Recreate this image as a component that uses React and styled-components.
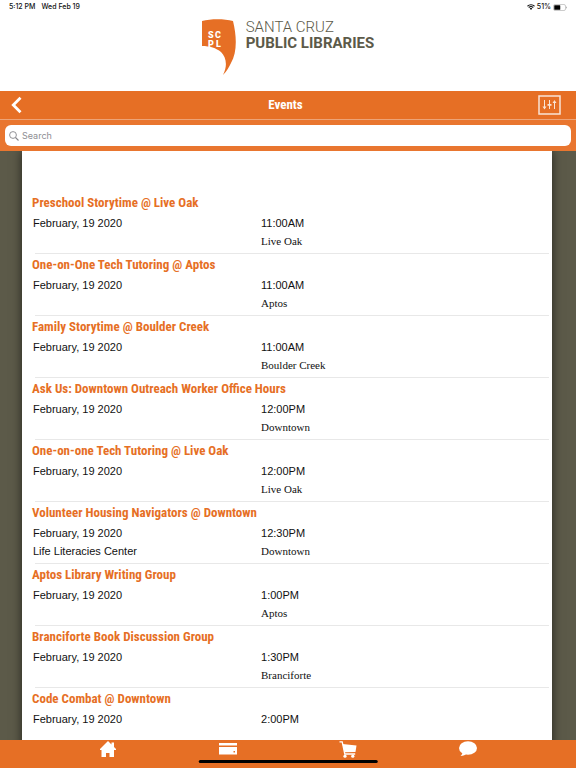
import React, { useState } from "react";
import styled, { createGlobalStyle } from "styled-components";

const events = [
  { title: "Preschool Storytime @ Live Oak", time: "11:00AM", place: "Live Oak" },
  { title: "One-on-One Tech Tutoring @ Aptos", time: "11:00AM", place: "Aptos" },
  { title: "Family Storytime @ Boulder Creek", time: "11:00AM", place: "Boulder Creek" },
  { title: "Ask Us: Downtown Outreach Worker Office Hours", time: "12:00PM", place: "Downtown" },
  { title: "One-on-one Tech Tutoring @ Live Oak", time: "12:00PM", place: "Live Oak" },
  {
    title: "Volunteer Housing Navigators @ Downtown",
    time: "12:30PM",
    place: "Downtown",
    room: "Life Literacies Center",
  },
  { title: "Aptos Library Writing Group", time: "1:00PM", place: "Aptos" },
  { title: "Branciforte Book Discussion Group", time: "1:30PM", place: "Branciforte" },
  { title: "Code Combat @ Downtown", time: "2:00PM" },
];

function App() {
  const [query, setQuery] = useState("");

  const shown = events.filter((event) =>
    event.title.toLowerCase().includes(query.toLowerCase())
  );

  return (
    <Screen>
      <GlobalStyle />
      <StatusBar>
        <StatusGroup $gap={6}>
          <span>5:12 PM</span>
          <span>Wed Feb 19</span>
        </StatusGroup>
        <StatusGroup $gap={2}>
          <WifiIcon />
          <span>51%</span>
          <BatteryIcon />
        </StatusGroup>
      </StatusBar>

      <Brand>
        <LogoMark />
        <BrandName>
          <span>SANTA CRUZ</span>
          <strong>PUBLIC LIBRARIES</strong>
        </BrandName>
      </Brand>

      <NavBar>
        <NavButton aria-label="Back">
          <BackIcon />
        </NavButton>
        <h1>Events</h1>
        <NavButton aria-label="Filter" $end>
          <FilterIcon />
        </NavButton>
      </NavBar>

      <SearchBar>
        <SearchField>
          <SearchIcon />
          <input
            type="text"
            aria-label="Search"
            placeholder="Search"
            value={query}
            onChange={(e) => setQuery(e.target.value)}
          />
        </SearchField>
      </SearchBar>

      <Content>
        <Sheet>
          {shown.map((event) => (
            <Event key={event.title}>
              <h2>{event.title}</h2>
              <Details>
                <span>February, 19 2020</span>
                <span>{event.time}</span>
                <span>{event.room}</span>
                <Place>{event.place}</Place>
              </Details>
            </Event>
          ))}
        </Sheet>
      </Content>

      <TabBar>
        <TabButton aria-label="Home">
          <HomeIcon />
        </TabButton>
        <TabButton aria-label="Library card">
          <CardIcon />
        </TabButton>
        <TabButton aria-label="Cart">
          <CartIcon />
        </TabButton>
        <TabButton aria-label="Messages">
          <ChatIcon />
        </TabButton>
        <HomeIndicator />
      </TabBar>
    </Screen>
  );
}

//Icons
const LogoMark = () => (
  <svg width="34" height="56" viewBox="0 0 34 56" aria-hidden="true">
    <path
      d="M0 2C9-.5 22-.5 31 2c4 16 4 32-2 42-2 4-4 8-8 12 5-10 3-18-2-23C14 29 8 27 0 27z"
      fill="#e66f25"
    />
    <g fill="#fff" fontFamily="Roboto, sans-serif" fontWeight="900" fontSize="9">
      <text x="6" y="19">S</text>
      <text x="13" y="19">C</text>
      <text x="6" y="28">P</text>
      <text x="14" y="28">L</text>
    </g>
  </svg>
);

const WifiIcon = () => (
  <svg width="8" height="6" viewBox="0 0 16 12" aria-hidden="true">
    <path d="M1 4.500a10 10 0 0 1 14 0M3.500 7.200a6.500 6.500 0 0 1 9 0" fill="none" stroke="#111" strokeWidth="2.200" />
    <path d="M5.500 9a3.500 3.500 0 0 1 5 0L8 11.800z" fill="#111" />
  </svg>
);

const BatteryIcon = () => (
  <svg width="14" height="7" viewBox="0 0 28 14" aria-hidden="true">
    <rect x="1" y="1" width="24" height="12" rx="3" fill="none" stroke="#999" />
    <rect x="2.500" y="2.500" width="12" height="9" rx="1" fill="#000" />
    <path d="M26 5c2 0 2 4 0 4z" fill="#999" />
  </svg>
);

const BackIcon = () => (
  <svg width="12" height="18" viewBox="0 0 12 18" aria-hidden="true">
    <path d="M10.500 1.800L3.300 9l7.200 7.200" fill="none" stroke="#fff" strokeWidth="2.800" />
  </svg>
);

const FilterIcon = () => (
  <svg width="23" height="20" viewBox="0 0 23 20" aria-hidden="true">
    <rect x="1" y="1" width="21" height="18" fill="none" stroke="#f9e4d6" strokeWidth="1.500" />
    <path d="M6.500 5v9M11.500 5v9M16.500 6v8" stroke="#f9e4d6" />
    <path d="M4.500 11.500h4l-2 3zM9.500 9h4v1.800h-4zM14.500 8h4l-2-3z" fill="#f9e4d6" />
  </svg>
);

const SearchIcon = () => (
  <svg width="10" height="10" viewBox="0 0 10 10" aria-hidden="true">
    <circle cx="4" cy="4" r="3.400" fill="none" stroke="#86868a" strokeWidth="0.900" />
    <path d="M6.500 6.500L9.500 9.500" stroke="#86868a" strokeWidth="1.100" />
  </svg>
);

const HomeIcon = () => (
  <svg width="18" height="18" viewBox="0 0 18 18" aria-hidden="true">
    <path d="M9 1L1 9v1h1.500v7H7v-4h3.500v4H15v-7h2V9l-2-2V2.500h-2.500v2z" fill="#fff" />
  </svg>
);

const CardIcon = () => (
  <svg width="18" height="18" viewBox="0 0 18 18" aria-hidden="true">
    <path d="M0 3h18v2.500H0z" fill="#fff" />
    <path d="M0 7h18v7.500H0zM14.500 11v1.500H16V11z" fill="#fff" fillRule="evenodd" />
  </svg>
);

const CartIcon = () => (
  <svg width="18" height="18" viewBox="0 0 18 18" aria-hidden="true">
    <path d="M3.500 4L17.500 5.500l-1 6.500-11 .3z" fill="#fff" />
    <path d="M.5 1.800h2.700l2.600 12.200h10.400" fill="none" stroke="#fff" strokeWidth="1.300" />
    <circle cx="6" cy="16.200" r="1.600" fill="#fff" />
    <circle cx="13.800" cy="16.200" r="1.600" fill="#fff" />
  </svg>
);

const ChatIcon = () => (
  <svg width="18" height="18" viewBox="0 0 18 18" aria-hidden="true">
    <ellipse cx="9" cy="8" rx="9" ry="6.800" fill="#fff" />
    <path d="M3.500 11.500c0 2-.5 3-2 4.500 3 0 5-1 6-2.500z" fill="#fff" />
  </svg>
);

const GlobalStyle = createGlobalStyle`
  * {
    box-sizing: border-box;
  }

  body {
    margin: 0;
    background: #fff;
    font-family: "Liberation Sans", Arial, sans-serif;
  }

  h1, h2 {
    margin: 0;
    font-family: "Roboto Condensed", Roboto, sans-serif;
    font-size: 13px;
    font-weight: bold;
    line-height: 22px;
  }

  button {
    display: flex;
    padding: 0;
    border: 0;
    background: none;
    cursor: pointer;
  }

  svg {
    display: block;
    flex-shrink: 0;
  }
`;

const Screen = styled.div`
  display: flex;
  flex-direction: column;
  height: 100vh;
`;

const StatusBar = styled.div`
  display: flex;
  justify-content: space-between;
  padding: 2px 9px 0;
  font-family: Inter, sans-serif;
  font-size: 7px;
  font-weight: 500;
  line-height: 10px;
  color: #111;
`;

const StatusGroup = styled.div`
  display: flex;
  align-items: center;
  gap: ${({ $gap }) => $gap}px;
`;

const Brand = styled.header`
  display: flex;
  justify-content: center;
  gap: 10px;
  height: 79px;
  padding-top: 7px;
`;

const BrandName = styled.div`
  display: flex;
  flex-direction: column;
  font-family: Roboto, sans-serif;
  font-size: 15px;
  font-weight: 300;
  line-height: 16px;
  color: #5c5a49;

  strong {
    font-weight: 700;
  }
`;

const NavBar = styled.nav`
  display: grid;
  grid-template-columns: 1fr auto 1fr;
  align-items: center;
  height: 29px;
  padding: 0 15px 0 10px;
  background: #e66f25;
  border-bottom: 1px solid #eda377;

  h1 {
    color: #fff;
  }
`;

const NavButton = styled.button`
  justify-self: ${({ $end }) => ($end ? "end" : "start")};
`;

const SearchBar = styled.div`
  padding: 5px;
  background: #e9762f;
`;

const SearchField = styled.label`
  display: flex;
  align-items: center;
  gap: 3px;
  height: 21px;
  padding: 0 4px;
  background: #fff;
  border-radius: 6px;

  input {
    flex: 1;
    min-width: 0;
    padding: 0;
    border: 0;
    outline: 0;
    background: none;
    font-family: Inter, sans-serif;
    font-size: 9px;
  }

  input::placeholder {
    color: #8e8e93;
  }
`;

const Content = styled.main`
  flex: 1;
  min-height: 0;
  padding: 0 24px 0 22px;
  overflow: hidden auto;
  scrollbar-width: none;
  background: #5c5a49;
`;

const Sheet = styled.ul`
  min-height: 100%;
  margin: 0;
  padding: 41px 0 0;
  list-style: none;
  background: #fff;
  box-shadow: 0 0 10px rgba(0, 0, 0, 0.6);
`;

const Event = styled.li`
  padding: 0 3px 0 10px;

  h2 {
    color: #e66f25;
  }

  &::after {
    content: "";
    display: block;
    height: 1px;
    margin-left: 3px;
    background: #e8e8e8;
  }
`;

const Details = styled.div`
  display: grid;
  grid-template-columns: 44% 1fr;
  grid-template-rows: 18px 18px;
  column-gap: 1px;
  align-items: center;
  padding: 0 0 3px 1px;
  font-size: 11px;
  line-height: 18px;
  color: #111;
`;

const Place = styled.span`
  font-family: "Liberation Serif", "Times New Roman", serif;
`;

const TabBar = styled.nav`
  position: relative;
  display: flex;
  justify-content: space-around;
  height: 28px;
  padding: 0 48px;
  background: #e66f25;
`;

const TabButton = styled.button`
  flex: 1;
  justify-content: center;
  align-items: flex-start;
`;

// lies over the tab bar
const HomeIndicator = styled.div`
  position: absolute;
  bottom: 5px;
  left: 50%;
  width: 31%;
  height: 3px;
  border-radius: 2px;
  background: #000;
  transform: translateX(-50%);
`;

export default App;
